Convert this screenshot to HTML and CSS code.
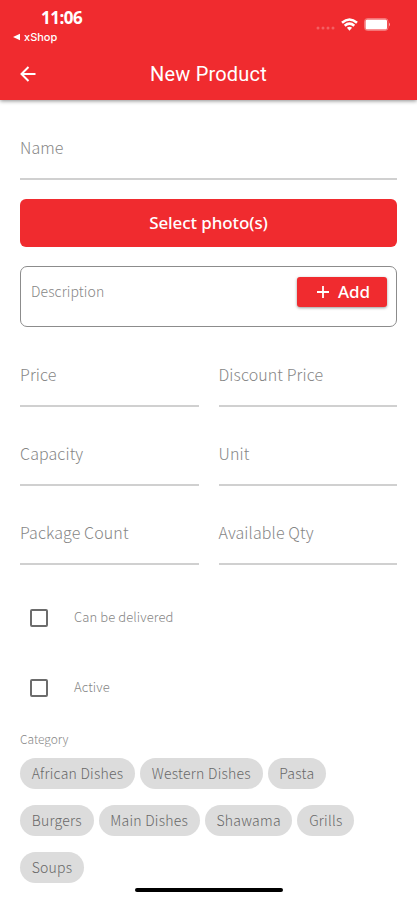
FILE: index.html
```html
<!DOCTYPE html>
<html lang="en">
<head>
  <meta charset="UTF-8" />
  <meta name="viewport" content="width=device-width, initial-scale=1.0" />
  <title>New Product</title>
  <link rel="stylesheet" href="styles.css">
</head>
<body>
  <header class="header">
    <div class="status-bar">
      <div class="status-left">
        <div class="time">11:06</div>
        <div class="back-app"><svg width="7" height="8" viewBox="0 0 7 8"><path d="M0 4L7 .7V7.3z" fill="#fff"/></svg><span>xShop</span></div>
      </div>
      <div class="status-icons">
        <svg class="signal" width="19" height="4" viewBox="0 0 19 4" fill="#fff"><circle cx="2" cy="2" r="1.5"/><circle cx="7" cy="2" r="1.5"/><circle cx="12" cy="2" r="1.5"/><circle cx="17" cy="2" r="1.5"/></svg>
        <svg class="wifi" width="17" height="13" viewBox="0 0 17 13" fill="none" stroke="#fff" stroke-width="2.6"><path d="M1 4.8Q8.5-1.8 16 4.8"/><path d="M3.7 7.8Q8.5 3.6 13.3 7.8"/><path d="M5.9 9.8Q8.5 7.5 11.1 9.8L8.5 12.7z" fill="#fff" stroke="none"/></svg>
        <svg class="battery" width="27" height="13" viewBox="0 0 27 13"><rect x=".5" y=".5" width="23.5" height="12" rx="3" fill="none" stroke="#fff" stroke-opacity=".35"/><rect x="1.5" y="1.5" width="21.5" height="10" rx="1.5" fill="#fff"/><path d="M25 4.5q2 2 0 4z" fill="#fff" fill-opacity=".6"/></svg>
      </div>
    </div>
    <div class="nav">
      <button class="back" aria-label="Back"><svg width="16" height="16" viewBox="0 0 16 16" fill="none" stroke="#fff" stroke-width="2"><path d="M15.5 8H1.5M8.5 1L1.5 8l7 7"/></svg></button>
      <h1 class="title">New Product</h1>
    </div>
  </header>

  <main class="form">
    <div class="field name">Name</div>
    <button class="photos">Select photo(s)</button>
    <div class="description">
      <span>Description</span>
      <button class="add"><svg width="12" height="12" viewBox="0 0 12 12" stroke="#fff" stroke-width="1.8"><path d="M6 0v12M0 6h12"/></svg>Add</button>
    </div>

    <div class="fields">
      <div class="field">Price</div>
      <div class="field">Discount Price</div>
      <div class="field">Capacity</div>
      <div class="field">Unit</div>
      <div class="field">Package Count</div>
      <div class="field">Available Qty</div>
    </div>

    <label class="check"><input type="checkbox"><span>Can be delivered</span></label>
    <label class="check"><input type="checkbox"><span>Active</span></label>

    <div class="category">Category</div>
    <div class="chips">
      <span class="chip">African Dishes</span>
      <span class="chip">Western Dishes</span>
      <span class="chip">Pasta</span>
      <span class="chip">Burgers</span>
      <span class="chip">Main Dishes</span>
      <span class="chip">Shawama</span>
      <span class="chip">Grills</span>
      <span class="chip">Soups</span>
    </div>
  </main>
  <div class="home-bar"></div>
</body>
</html>
```
FILE: styles.css
```css
* {
  box-sizing: border-box;
}
body {
  margin: 0;
  height: 900px;
  overflow: hidden;
  background: #fff;
  color: #868686;
  font-family: "Noto Sans CJK SC", "Noto Sans", sans-serif;
  font-weight: 300;
}
button {
  border: none;
  padding: 0;
  color: #fff;
  background: #f02b2f;
  font-family: inherit;
}
svg {
  display: block;
  flex: none;
}
.header {
  height: 100px;
  background: #f02b2f;
  color: #fff;
  box-shadow: 0 1px 4px rgba(0,0,0,0.45);
}
.status-bar {
  height: 48px;
  display: flex;
  justify-content: space-between;
  padding: 8px 26px 0 13px;
}
.time {
  margin-left: 28px;
  font: bold 17px/20px "Open Sans", sans-serif;
  letter-spacing: -0.5px;
}
.back-app {
  display: flex;
  align-items: center;
  gap: 4px;
  font: 500 11px/18px Inter, sans-serif;
}
.status-icons {
  display: flex;
  height: 32px;
  align-items: center;
}
.signal {
  margin: 8px 6px 0 0;
  opacity: 0.25;
}
.wifi {
  margin-right: 6px;
}
.nav {
  height: 52px;
  display: grid;
  grid-template-columns: 40px 1fr 40px;
  align-items: center;
  padding: 0 20px;
}
.title {
  margin: 0;
  text-align: center;
  font: 400 20px/24px Roboto, sans-serif;
  letter-spacing: 0.2px;
}
.form {
  padding: 27px 20px 0;
}
.field {
  height: 53px;
  border-bottom: 2px solid #d0d0d0;
  font-size: 16px;
  line-height: 41px;
  letter-spacing: 0.1px;
}
.photos {
  display: block;
  width: 100%;
  height: 48px;
  margin: 19px 0;
  border-radius: 6px;
  font: 500 17px/24px "Noto Sans", sans-serif;
  letter-spacing: -0.1px;
}
.description {
  height: 61px;
  display: flex;
  justify-content: space-between;
  align-items: flex-start;
  padding: 10px 9px 10px 10px;
  border: 1px solid #8c8c8c;
  border-radius: 7px;
  font-size: 14px;
  line-height: 29px;
  letter-spacing: 0.1px;
}
.add {
  width: 90px;
  height: 30px;
  display: flex;
  justify-content: center;
  align-items: center;
  gap: 9px;
  padding-left: 3px;
  border-radius: 3px;
  box-shadow: 0 1px 3px rgba(0,0,0,0.4);
  font: 500 17px/24px "Noto Sans", sans-serif;
}
.fields {
  display: grid;
  grid-template-columns: 1fr 1fr;
  gap: 26px 20px;
  margin: 27px 0 18px;
}
.check {
  height: 70px;
  display: flex;
  align-items: center;
  padding-left: 10px;
  font-size: 13px;
  letter-spacing: 0.1px;
}
.check span {
  margin-top: -3px;
}
.check input {
  appearance: none;
  width: 18px;
  height: 18px;
  margin: 0 26px 0 0;
  border: 2px solid #6c6c6c;
  border-radius: 2px;
}
.category {
  margin-top: 6px;
  font-size: 12px;
  line-height: 20px;
}
.chips {
  display: flex;
  flex-wrap: wrap;
  gap: 16px 5px;
  margin-top: 9px;
}
.chip {
  height: 31px;
  padding: 0 11.7px;
  border-radius: 16px;
  background: #dcdcdc;
  color: #686868;
  font-size: 14px;
  line-height: 30px;
  letter-spacing: 0.25px;
}
.home-bar {
  position: absolute;
  left: 135px;
  top: 888px;
  width: 148px;
  height: 4px;
  border-radius: 2px;
  background: #000;
}
```
